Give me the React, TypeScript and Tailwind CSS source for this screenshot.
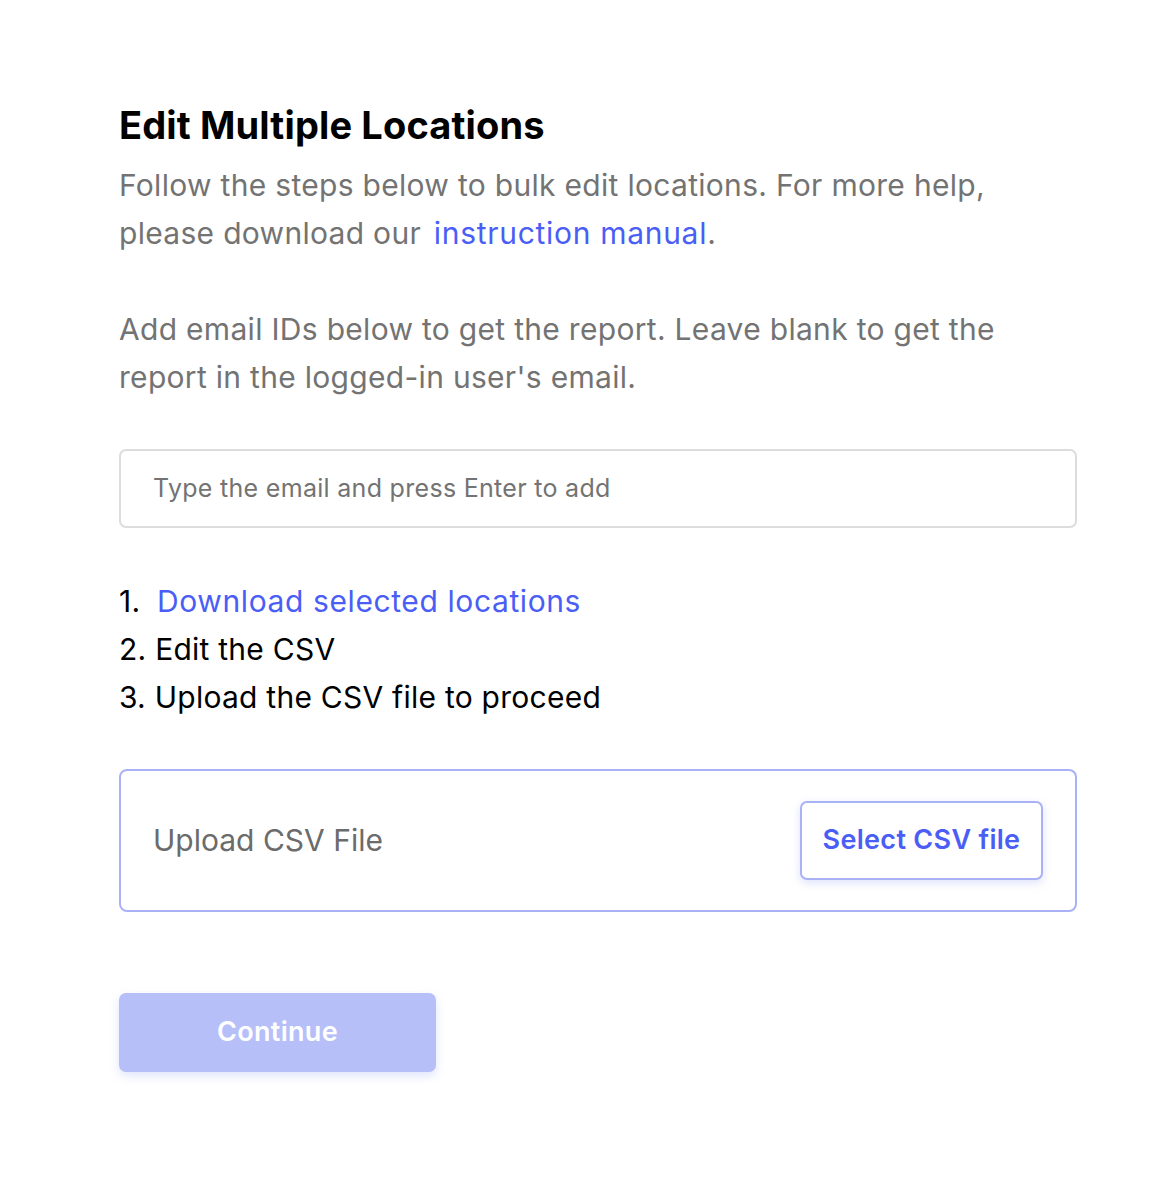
import React from "react";

export default function App() {
  return (
    <div className="min-h-[1192px] w-[1162px] bg-white font-['Inter',sans-serif]">
      <div className="pl-[119px] pr-[85px] pt-[100px]">
        <h1 className="text-[38px] font-bold leading-[50px] text-black tracking-[0.15px]">Edit Multiple Locations</h1>
        <p className="mt-[11px] text-[30px] leading-[48px] text-[#737373] tracking-[0.3px]">
          Follow the steps below to bulk edit locations. For more help,
          <br />
          please download our <span className="ml-[4px] text-[#4a5ef6] tracking-[0.7px]">instruction manual</span>.
        </p>
        <p className="mt-[48px] text-[30px] leading-[48px] text-[#737373] tracking-[0.3px]">
          Add email IDs below to get the report. Leave blank to get the
          <br />
          report in the logged-in user's email.
        </p>
        <div className="mt-[48px] flex h-[79px] items-center rounded-[7px] border-2 border-[#dcdcdc] pl-[32px]">
          <span className="text-[25px] text-[#737373] tracking-[0.3px]">Type the email and press Enter to add</span>
        </div>
        <ol className="mt-[49px] text-[30px] leading-[48px] text-black tracking-[0.25px]">
          <li>
            1. <span className="ml-[8px] text-[#4a5ef6] tracking-[0.6px]">Download selected locations</span>
          </li>
          <li>2. Edit the CSV</li>
          <li>3. Upload the CSV file to proceed</li>
        </ol>
        <div className="mt-[48px] flex h-[143px] items-center justify-between rounded-[8px] border-2 border-[#a9b2f6] pl-[32px] pr-[32px]">
          <span className="text-[30px] text-[#6b6b6b]">Upload CSV File</span>
          <button className="h-[79px] w-[243px] rounded-[7px] border-2 border-[#a9b2f6] bg-white text-[27px] font-semibold text-[#4a5ef6] tracking-[0.3px] shadow-[0_3px_8px_rgba(120,140,240,0.25)]">
            Select CSV file
          </button>
        </div>
        <button className="mt-[81px] h-[79px] w-[317px] rounded-[7px] bg-[#b6bff7] text-[27px] font-semibold text-white tracking-[0.3px] shadow-[0_4px_10px_rgba(150,170,240,0.3)]">
          Continue
        </button>
      </div>
    </div>
  );
}
